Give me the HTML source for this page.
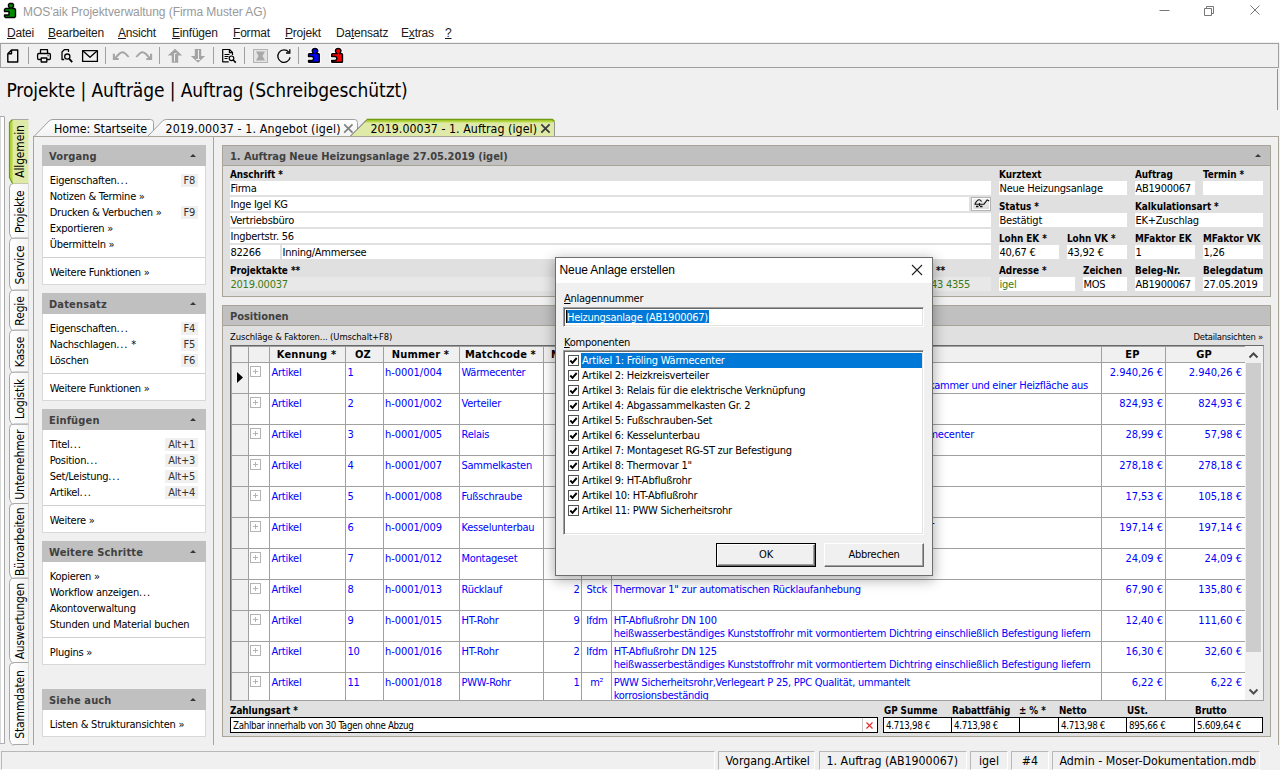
<!DOCTYPE html>
<html lang="de"><head><meta charset="utf-8"><title>MOS'aik Projektverwaltung</title>
<style>
*{box-sizing:border-box;margin:0;padding:0}
html,body{width:1280px;height:770px;overflow:hidden;background:#f0f0f0}
body{font-family:"DejaVu Sans Condensed","Liberation Sans",sans-serif;font-size:11px;color:#000;position:relative;letter-spacing:-0.25px}
.abs{position:absolute}
.t{position:absolute;white-space:nowrap;line-height:14px}
.b{font-weight:bold;letter-spacing:-0.1px}
u{text-decoration:underline}
.menu{position:absolute;top:24px;font-family:"Liberation Sans",sans-serif;font-size:12px;letter-spacing:-0.2px;color:#1a1a1a;white-space:nowrap;line-height:18px}
.gh{position:absolute;background:#c0c0c0;height:21px;font-weight:bold;font-size:11px;color:#404040;line-height:24px;padding-left:7px;letter-spacing:-0.050px}
.gh i{position:absolute;right:10px;top:9px;width:0;height:0;border-left:3px solid transparent;border-right:3px solid transparent;border-bottom:3px solid #383838}
.lb{position:absolute;background:#fff;border:1px solid #d8d8d8;border-top:none}
.li{position:absolute;left:6.700px;white-space:nowrap;line-height:14px}
.k{position:absolute;color:#333;background:#f0f0f0;line-height:14px;height:13px;padding:0 3px;white-space:nowrap}
.d{letter-spacing:0.9px}
.sep{position:absolute;left:0;right:0;height:1px;background:#d0d0d0}
.fld{position:absolute;background:#fff;height:14px;line-height:16px;white-space:nowrap;padding-left:0.5px;overflow:hidden}
.lab{position:absolute;font-weight:bold;font-size:9.900px;white-space:nowrap;line-height:14px;letter-spacing:-0.05px;margin-top:1px}
.grn{color:#3b7c16}
.sb{position:absolute;top:751px;height:19px;border:1px solid #b8b8b8;border-right-color:#fff;border-bottom-color:#fff;background:#f0f0f0;font-size:12.300px;line-height:19px;white-space:nowrap;letter-spacing:0;padding-left:6.500px}

.c{position:absolute;white-space:nowrap;line-height:14px;color:#0000ff}
.n{letter-spacing:-0.030px}
.hc{position:absolute;white-space:nowrap;line-height:14px;font-weight:bold;letter-spacing:0.150px}
.tf{position:absolute;height:16px;background:#fff;border:1px solid #000;font-size:9.700px;line-height:13px;white-space:nowrap;letter-spacing:-0.3px;overflow:hidden}
.tf span{position:absolute;left:2px;top:1px}
.sunk{background:#fff;border:1px solid #a0a0a0;border-right-color:#fff;border-bottom-color:#fff;box-shadow:inset 1px 1px 0 #696969,inset -1px -1px 0 #e3e3e3}
.cb{width:11px;height:11px;background:#fff;border:1px solid #555}
.cb svg{position:absolute;left:0;top:0}
</style></head>
<body>
<div class="abs" style="left:0;top:0;width:1280px;height:42px;background:#fff"></div>
<svg class="abs" style="left:0;top:0" width="20" height="20" viewBox="0 0 20 20"><path d="M9.500 3.500h3l1 1v2l-1 1h-.5v1h2.500l1 1v7l-1 1h-9l-1-1v-1.500h4.500v-3.500h-4.500v-2l1-1h4.500v-1h-.5l-1-1v-2z" fill="#008c00" stroke="#000" stroke-width="1.400" stroke-linejoin="round"/></svg>
<div class="t" style="left:23px;top:4px;font-family:'Liberation Sans',sans-serif;font-size:12px;letter-spacing:-0.05px;color:#999;line-height:16px">MOS'aik Projektverwaltung (Firma Muster AG)</div>
<svg class="abs" style="left:1150px;top:0" width="130" height="22" viewBox="0 0 130 22"><g stroke="#777" stroke-width="1" fill="none"><path d="M9.5 10.5h10"/><path d="M54.5 8.5h7v7h-7z M56.5 8.5v-2h7v7h-2"/><path d="M100.5 5.5l9 9M109.5 5.5l-9 9"/></g></svg>
<div class="menu" style="left:7px"><u>D</u>atei</div>
<div class="menu" style="left:48px"><u>B</u>earbeiten</div>
<div class="menu" style="left:118px"><u>A</u>nsicht</div>
<div class="menu" style="left:172px"><u>E</u>infügen</div>
<div class="menu" style="left:233px"><u>F</u>ormat</div>
<div class="menu" style="left:285px"><u>P</u>rojekt</div>
<div class="menu" style="left:336px">Da<u>t</u>ensatz</div>
<div class="menu" style="left:401px">E<u>x</u>tras</div>
<div class="menu" style="left:445px"><u>?</u></div>
<div class="abs" style="left:0;top:43px;width:1279px;height:25px;border:1px solid #a0a0a0;background:#f0f0f0"></div>
<svg class="abs" style="left:0;top:43px" width="360" height="25" viewBox="0 43 360 25">
<g stroke="#a0a0a0" stroke-width="1"><path d="M28.5 47v17M105.5 47v17M159.5 47v17M213.5 47v17M244.5 47v17M298.5 47v17"/></g>
<!-- new document -->
<path d="M11.5 50h6.2v12h-9.9v-8.3z M11.5 50v3.7h-3.7" fill="none" stroke="#000" stroke-width="1.4" stroke-linejoin="round"/>
<!-- printer -->
<g fill="none" stroke="#000" stroke-width="1.3" stroke-linejoin="round"><path d="M40.5 53.5v-3.8h7v3.8"/><rect x="37.6" y="53.5" width="12.8" height="6" rx="1.2"/><rect x="41.2" y="58" width="5.6" height="4" fill="#f0f0f0"/><path d="M47.6 55.6h.9"/></g>
<!-- preview (doc with magnifier) -->
<g fill="none" stroke="#000" stroke-width="1.3"><path d="M68.5 52v-2.3h-4.2l-2.3 2.3v7.5h2.2" stroke-linejoin="round"/><circle cx="67.3" cy="56.6" r="2.6"/><path d="M69.3 58.8l2.9 3.4" stroke-width="1.8"/></g>
<!-- mail -->
<g fill="none" stroke="#000" stroke-width="1.3" stroke-linejoin="round"><rect x="82.6" y="50.6" width="14.8" height="10.8"/><path d="M82.8 50.8l7.2 6.4 7.2-6.4"/></g>
<!-- undo / redo (disabled) -->
<g fill="none" stroke="#a4a4a4" stroke-width="1.9"><path d="M115.300 58.200c2.500-3.200 5-6 7-6s4.500 2.500 6.400 4.800"/><path d="M113.900 53.700v5.300h4.800" stroke-width="2.100"/><path d="M149.700 58.200c-2.500-3.200-5-6-7-6s-4.500 2.500-6.400 4.800"/><path d="M151.100 53.700v5.300h-4.800" stroke-width="2.100"/></g>
<!-- up / down arrows (disabled) -->
<g fill="#a4a4a4" stroke="none"><path d="M175 48.800l7.200 6.700h-4v7.200h-6.400v-7.200h-4z"/><path d="M198 62.800l7.200-6.700h-4v-7.200h-6.400v7.200h-4z"/></g>
<g fill="none" stroke="#f0f0f0" stroke-width="1"><path d="M174.500 61.500v-8h2"/><path d="M198.500 50v9.500M196 59.500h4"/></g>
<!-- document search -->
<g fill="none" stroke="#000" stroke-width="1.2"><path d="M232.500 55v-2.500l-3-3h-6.800v12.300h6" stroke-linejoin="round"/><path d="M229.400 49.700v3h3"/><path d="M224.500 54.500h5M224.500 56.500h4M224.500 58.500h3" stroke-width="1"/><circle cx="231.500" cy="58.300" r="2.300"/><path d="M233.200 60l2.600 2.600" stroke-width="1.500"/></g>
<!-- disabled X box -->
<g><rect x="253.500" y="49.500" width="14" height="13" fill="#e4e4e4" stroke="#b4b4b4" stroke-width="1"/><path d="M256 51.500h9l-2.500 4.500 2.500 4.500h-9l2.500-4.500z" fill="#a8a8a8"/></g>
<!-- refresh -->
<g fill="none" stroke="#000" stroke-width="1.300"><path d="M288.800 52.200a6.200 6.200 0 1 0 1.300 5.200"/><path d="M289.800 49.200v3.800h-3.800" stroke-linejoin="miter"/></g>
<!-- blue puzzle -->
<path d="M313.8 53.600C311.3 52 311.8 48.400 315.0 48.400S318.7 52 316.2 53.600H318.5Q319.3 53.600 319.3 54.400V61.500Q319.3 62.300 318.5 62.300H309.3Q308.5 62.300 308.5 61.500V60.400H311.6A2 2 0 0 0 311.6 56.400H308.5V54.400Q308.5 53.600 309.3 53.600Z" fill="none" stroke="#fff" stroke-width="3.200" stroke-linejoin="round"/><path d="M313.8 53.600C311.3 52 311.8 48.400 315.0 48.400S318.7 52 316.2 53.600H318.5Q319.3 53.600 319.3 54.400V61.500Q319.3 62.300 318.5 62.300H309.3Q308.5 62.300 308.5 61.500V60.400H311.6A2 2 0 0 0 311.6 56.400H308.5V54.400Q308.5 53.600 309.3 53.600Z" fill="#0000f8" stroke="#000" stroke-width="1.450" stroke-linejoin="round"/>
<!-- red puzzle -->
<path d="M337.0 53.600C334.5 52 335.0 48.400 338.2 48.400S341.9 52 339.4 53.600H341.7Q342.5 53.600 342.5 54.400V61.500Q342.5 62.300 341.7 62.300H332.5Q331.7 62.300 331.7 61.500V60.400H334.8A2 2 0 0 0 334.8 56.400H331.7V54.400Q331.7 53.600 332.5 53.600Z" fill="none" stroke="#fff" stroke-width="3.200" stroke-linejoin="round"/><path d="M337.0 53.600C334.5 52 335.0 48.400 338.2 48.400S341.9 52 339.4 53.600H341.7Q342.5 53.600 342.5 54.400V61.500Q342.5 62.300 341.7 62.300H332.5Q331.7 62.300 331.7 61.500V60.400H334.8A2 2 0 0 0 334.8 56.400H331.7V54.400Q331.7 53.600 332.5 53.600Z" fill="#f80000" stroke="#000" stroke-width="1.450" stroke-linejoin="round"/>
</svg>

<div class="t" style="left:6.500px;top:78px;font-size:19px;line-height:24px;letter-spacing:-0.1px">Projekte | Aufträge | Auftrag (Schreibgeschützt)</div>
<div class="abs" style="left:1277px;top:69px;width:1px;height:41px;background:#909090"></div>
<svg class="abs" style="left:0;top:110px" width="34" height="640" viewBox="0 110 34 640" font-family="DejaVu Sans Condensed,Liberation Sans,sans-serif" font-size="12">
<defs><linearGradient id="vg" x1="0" y1="0" x2="1" y2="0"><stop offset="0" stop-color="#fff"/><stop offset="1" stop-color="#f4f4f4"/></linearGradient><linearGradient id="va" x1="0" y1="0" x2="1" y2="0"><stop offset="0" stop-color="#b3d535"/><stop offset=".13" stop-color="#b8d844"/><stop offset=".2" stop-color="#dfeaa9"/><stop offset="1" stop-color="#dfeaa9"/></linearGradient></defs>
<path d="M0 116h5v628h-5z" fill="#fff"/><path d="M0 116.500h4.500v627" stroke="#a8a8a8" stroke-width="1" fill="none"/><path d="M0.500 117v626" stroke="#d8d8d8" fill="none"/><path d="M0 743.500h5" stroke="#b0b0b0" fill="none"/>
<path d="M28.500 662.5H13Q9.500 663.0 9.500 667.0V739.5Q10 743.0 13 745.5L13.500 744.5H28.500" fill="url(#vg)" stroke="#a8a8a8" stroke-width="1"/>
<path d="M28.500 662.5V744.5" stroke="#d8d8d8" stroke-width="1"/>
<path d="M28.500 578H13Q9.500 578.5 9.500 582.5V657.5Q10 661.0 13 663.5L13.500 662.5H28.500" fill="url(#vg)" stroke="#a8a8a8" stroke-width="1"/>
<path d="M28.500 578V662.5" stroke="#d8d8d8" stroke-width="1"/>
<path d="M28.500 503.5H13Q9.500 504.0 9.500 508.0V573Q10 576.5 13 579L13.500 578H28.500" fill="url(#vg)" stroke="#a8a8a8" stroke-width="1"/>
<path d="M28.500 503.5V578" stroke="#d8d8d8" stroke-width="1"/>
<path d="M28.500 424H13Q9.500 424.5 9.500 428.5V498.5Q10 502.0 13 504.5L13.500 503.5H28.500" fill="url(#vg)" stroke="#a8a8a8" stroke-width="1"/>
<path d="M28.500 424V503.5" stroke="#d8d8d8" stroke-width="1"/>
<path d="M28.500 372H13Q9.500 372.5 9.500 376.5V419Q10 422.5 13 425L13.500 424H28.500" fill="url(#vg)" stroke="#a8a8a8" stroke-width="1"/>
<path d="M28.500 372V424" stroke="#d8d8d8" stroke-width="1"/>
<path d="M28.500 330H13Q9.500 330.5 9.500 334.5V367Q10 370.5 13 373L13.500 372H28.500" fill="url(#vg)" stroke="#a8a8a8" stroke-width="1"/>
<path d="M28.500 330V372" stroke="#d8d8d8" stroke-width="1"/>
<path d="M28.500 290H13Q9.500 290.5 9.500 294.5V325Q10 328.5 13 331L13.500 330H28.500" fill="url(#vg)" stroke="#a8a8a8" stroke-width="1"/>
<path d="M28.500 290V330" stroke="#d8d8d8" stroke-width="1"/>
<path d="M28.500 238H13Q9.500 238.5 9.500 242.5V285Q10 288.5 13 291L13.500 290H28.500" fill="url(#vg)" stroke="#a8a8a8" stroke-width="1"/>
<path d="M28.500 238V290" stroke="#d8d8d8" stroke-width="1"/>
<path d="M28.500 183.5H13Q9.500 184.0 9.500 188.0V233Q10 236.5 13 239L13.500 238H28.500" fill="url(#vg)" stroke="#a8a8a8" stroke-width="1"/>
<path d="M28.500 183.5V238" stroke="#d8d8d8" stroke-width="1"/>
<path d="M28.500 119.5H12.500L9.500 122.5V177.5L12.500 183.5H28.500Z" fill="url(#va)"/><path d="M12.500 119.5L9.500 122.5V177.5L12.500 183.5" fill="none" stroke="#6c9c0c" stroke-width="1.200"/><path d="M12.500 119.5H28.500" fill="none" stroke="#a8a8a8" stroke-width="1"/>
<text transform="translate(23.500 151.5) rotate(-90)" text-anchor="middle" letter-spacing="-0.150">Allgemein</text>
<text transform="translate(23.500 211.75) rotate(-90)" text-anchor="middle" letter-spacing="-0.150">Projekte</text>
<text transform="translate(23.500 265.0) rotate(-90)" text-anchor="middle" letter-spacing="-0.150">Service</text>
<text transform="translate(23.500 311.0) rotate(-90)" text-anchor="middle" letter-spacing="-0.150">Regie</text>
<text transform="translate(23.500 352.0) rotate(-90)" text-anchor="middle" letter-spacing="-0.150">Kasse</text>
<text transform="translate(23.500 399.0) rotate(-90)" text-anchor="middle" letter-spacing="-0.150">Logistik</text>
<text transform="translate(23.500 464.75) rotate(-90)" text-anchor="middle" letter-spacing="-0.150">Unternehmer</text>
<text transform="translate(23.500 541.75) rotate(-90)" text-anchor="middle" letter-spacing="-0.150">Büroarbeiten</text>
<text transform="translate(23.500 621.25) rotate(-90)" text-anchor="middle" letter-spacing="-0.150">Auswertungen</text>
<text transform="translate(23.500 704.5) rotate(-90)" text-anchor="middle" letter-spacing="-0.150">Stammdaten</text>
</svg>
<svg class="abs" style="left:30px;top:115px" width="540" height="23" viewBox="30 115 540 23" font-family="DejaVu Sans Condensed,Liberation Sans,sans-serif" font-size="12.300">
<defs><linearGradient id="hg" x1="0" y1="0" x2="0" y2="1"><stop offset="0" stop-color="#fff"/><stop offset="1" stop-color="#f2f2f2"/></linearGradient><linearGradient id="ha" x1="0" y1="0" x2="0" y2="1"><stop offset="0" stop-color="#b3d535"/><stop offset=".14" stop-color="#b8d844"/><stop offset=".2" stop-color="#dfeaa9"/><stop offset="1" stop-color="#dfeaa9"/></linearGradient></defs>
<path d="M34 136.500L49 121Q50.5 119.500 53 119.500H150.5Q153.5 119.500 153.5 122.500V136.500" fill="url(#hg)" stroke="#a0a0a0" stroke-width="1"/>
<path d="M147.5 136.500L162.5 121Q164.0 119.500 166.5 119.500H354.5Q357.5 119.500 357.5 122.500V136.500" fill="url(#hg)" stroke="#a0a0a0" stroke-width="1"/>
<path d="M350 136.500L367 119.500H552.5L554.5 121.500V136.500Z" fill="url(#ha)"/>
<path d="M350 136.500L366.5 120" stroke="#606060" stroke-width="1" fill="none"/>
<path d="M366.5 119.500H552.5L554.5 121.500" stroke="#6c9c0c" stroke-width="1.300" fill="none"/>
<path d="M554.5 122V136.500" stroke="#949494" stroke-width="1" fill="none"/>
<text x="54" y="132.500" letter-spacing="-0.050">Home: Startseite</text>
<text x="165.500" y="132.500" letter-spacing="0.150">2019.00037 - 1. Angebot (igel)</text>
<text x="370.500" y="132.500" letter-spacing="0.050">2019.00037 - 1. Auftrag (igel)</text>
<path d="M344.200 124.300l8.300 8.400M352.500 124.300l-8.300 8.400" stroke="#808080" stroke-width="1.700" fill="none"/>
<path d="M541.300 124.300l8.300 8.400M549.600 124.300l-8.300 8.400" stroke="#3c3c3c" stroke-width="1.800" fill="none"/>
</svg>
<div class="abs" style="left:33px;top:136px;width:181px;height:609px;border:1px solid #a8a498;border-right:none;border-bottom:none;"></div>
<div class="abs" style="left:213px;top:136px;width:1px;height:609px;background:#a8a498"></div>
<div class="abs" style="left:214px;top:136px;width:1065px;height:609px;border-top:1px solid #a8a498;border-right:1px solid #a8a498"></div>
<div class="gh" style="left:42px;top:145px;width:164px;letter-spacing:0.150px">Vorgang<i></i></div>
<div class="lb" style="left:42px;top:166px;width:164px;height:119px"><div class="li" style="top:8px">Eigenschaften<span class=d>...</span></div><div class="k" style="right:7px;top:7.5px">F8</div><div class="li" style="top:24px">Notizen &amp; Termine »</div><div class="li" style="top:40px">Drucken &amp; Verbuchen »</div><div class="k" style="right:7px;top:39.5px">F9</div><div class="li" style="top:56px">Exportieren »</div><div class="li" style="top:72px">Übermitteln »</div><div class="sep" style="top:91px"></div><div class="li" style="top:100px">Weitere Funktionen »</div></div>
<div class="gh" style="left:42px;top:293px;width:164px;letter-spacing:0.150px">Datensatz<i></i></div>
<div class="lb" style="left:42px;top:314px;width:164px;height:87px"><div class="li" style="top:8px">Eigenschaften<span class=d>...</span></div><div class="k" style="right:7px;top:7.5px">F4</div><div class="li" style="top:24px">Nachschlagen<span class=d>...</span> *</div><div class="k" style="right:7px;top:23.5px">F5</div><div class="li" style="top:40px">Löschen</div><div class="k" style="right:7px;top:39.5px">F6</div><div class="sep" style="top:59px"></div><div class="li" style="top:68px">Weitere Funktionen »</div></div>
<div class="gh" style="left:42px;top:409px;width:164px;letter-spacing:0.150px">Einfügen<i></i></div>
<div class="lb" style="left:42px;top:430px;width:164px;height:103px"><div class="li" style="top:8px">Titel<span class=d>...</span></div><div class="k" style="right:7px;top:7.5px">Alt+1</div><div class="li" style="top:24px">Position<span class=d>...</span></div><div class="k" style="right:7px;top:23.5px">Alt+3</div><div class="li" style="top:40px">Set/Leistung<span class=d>...</span></div><div class="k" style="right:7px;top:39.5px">Alt+5</div><div class="li" style="top:56px">Artikel<span class=d>...</span></div><div class="k" style="right:7px;top:55.5px">Alt+4</div><div class="sep" style="top:75px"></div><div class="li" style="top:84px">Weitere »</div></div>
<div class="gh" style="left:42px;top:541px;width:164px;letter-spacing:0.150px">Weitere Schritte<i></i></div>
<div class="lb" style="left:42px;top:562px;width:164px;height:103px"><div class="li" style="top:8px">Kopieren »</div><div class="li" style="top:24px">Workflow anzeigen<span class=d>...</span></div><div class="li" style="top:40px">Akontoverwaltung</div><div class="li" style="top:56px">Stunden und Material buchen</div><div class="sep" style="top:75px"></div><div class="li" style="top:84px">Plugins »</div></div>
<div class="gh" style="left:42px;top:689px;width:164px;letter-spacing:0.150px">Siehe auch<i></i></div>
<div class="lb" style="left:42px;top:710px;width:164px;height:27px"><div class="li" style="top:8px">Listen &amp; Strukturansichten »</div></div>
<div class="abs" style="left:222px;top:145px;width:1049px;height:152px;border:1px solid #a8a498;background:#e0e0e0"></div>
<div class="gh" style="left:223px;top:146px;width:1047px;height:20px;line-height:21px;border-bottom:1px solid #a8a498">1. Auftrag Neue Heizungsanlage 27.05.2019 (igel)<i style="right:9.500px;top:8px"></i></div>
<div class="lab" style="left:230px;top:167px">Anschrift *</div>
<div class="fld " style="left:230px;top:181px;width:761px">Firma</div>
<div class="fld " style="left:230px;top:197px;width:739px">Inge Igel KG</div>
<div class="fld " style="left:230px;top:213px;width:761px">Vertriebsbüro</div>
<div class="fld " style="left:230px;top:229px;width:761px">Ingbertstr. 56</div>
<div class="fld " style="left:230px;top:245px;width:50px">82266</div>
<div class="fld " style="left:282px;top:245px;width:709px">Inning/Ammersee</div>
<div class="abs" style="left:971px;top:197px;width:20px;height:14px;border:1px solid #b4b4b4;background:linear-gradient(#f0f0f0,#dcdcdc);box-shadow:inset 0 0 0 1px #fff"></div>
<svg class="abs" style="left:971px;top:197px" width="20" height="14" viewBox="971 197 20 14"><g fill="none" stroke="#111" stroke-width="1.100"><path d="M975 204c1.200-2.500 2.800-4.200 4.200-4.200s1.800 1 2.300 1.800"/><path d="M974.500 204.200h9.500l3.200-4.200 2 1"/><path d="M976 206.500h2.500M980 206.500h2.500" stroke-width="1.300"/><path d="M979.500 203v3"/></g></svg>
<div class="lab" style="left:230px;top:263px">Projektakte **</div>
<div class="fld grn" style="left:230px;top:277px;width:761px;background:#e8e8e8">2019.00037</div>
<div class="lab" style="left:936px;top:263px">**</div>
<div class="t grn" style="left:931px;top:278px">43 4355</div>
<div class="lab" style="left:999px;top:167px">Kurztext</div>
<div class="fld " style="left:999px;top:181px;width:128px">Neue Heizungsanlage</div>
<div class="lab" style="left:1135px;top:167px">Auftrag</div>
<div class="fld " style="left:1135px;top:181px;width:60px">AB1900067</div>
<div class="lab" style="left:1203px;top:167px">Termin *</div>
<div class="fld " style="left:1203px;top:181px;width:60px"></div>
<div class="lab" style="left:999px;top:199px">Status *</div>
<div class="fld " style="left:999px;top:213px;width:128px">Bestätigt</div>
<div class="lab" style="left:1135px;top:199px">Kalkulationsart *</div>
<div class="fld " style="left:1135px;top:213px;width:128px">EK+Zuschlag</div>
<div class="lab" style="left:999px;top:231px">Lohn EK *</div>
<div class="fld " style="left:999px;top:245px;width:60px">40,67 €</div>
<div class="lab" style="left:1067px;top:231px">Lohn VK *</div>
<div class="fld " style="left:1067px;top:245px;width:60px">43,92 €</div>
<div class="lab" style="left:1135px;top:231px">MFaktor EK</div>
<div class="fld " style="left:1135px;top:245px;width:60px">1</div>
<div class="lab" style="left:1203px;top:231px">MFaktor VK</div>
<div class="fld " style="left:1203px;top:245px;width:60px">1,26</div>
<div class="lab" style="left:999px;top:263px">Adresse *</div>
<div class="fld grn" style="left:999px;top:277px;width:76px">igel</div>
<div class="lab" style="left:1083px;top:263px">Zeichen</div>
<div class="fld " style="left:1083px;top:277px;width:44px">MOS</div>
<div class="lab" style="left:1135px;top:263px">Beleg-Nr.</div>
<div class="fld " style="left:1135px;top:277px;width:60px">AB1900067</div>
<div class="lab" style="left:1203px;top:263px">Belegdatum</div>
<div class="fld " style="left:1203px;top:277px;width:60px">27.05.2019</div>
<div class="abs" style="left:222px;top:305px;width:1049px;height:432px;border:1px solid #a8a498;background:#e0e0e0"></div>
<div class="gh" style="left:223px;top:306px;width:1047px;height:20px;line-height:21px;border-bottom:1px solid #a8a498">Positionen</div>
<div class="t" style="left:230px;top:330px;font-size:9.400px;letter-spacing:-0.100px">Zuschläge &amp; Faktoren... (Umschalt+F8)</div>
<div class="t" style="right:17px;top:330px;font-size:9.400px;letter-spacing:-0.250px">Detailansichten »</div>
<div class="abs" id="grid" style="left:230px;top:345px;width:1034px;height:356px;background:#fff;border:1px solid #696969;border-right-color:#a0a0a0;border-bottom-color:#a0a0a0;overflow:hidden">
<div class="abs" style="left:0;top:0;width:1014px;height:16px;background:#f0f0f0"></div>
<div class="abs" style="left:0;top:0;width:17px;height:356px;background:#f0f0f0"></div>
<div class="abs" style="left:0;top:0;width:1px;height:356px;background:#a0a0a0"></div>
<div class="abs" style="left:0;top:0;width:1014px;height:1px;background:#a0a0a0"></div>
<svg class="abs" style="left:0;top:0" width="1014" height="356" viewBox="231 346 1014 356"><g stroke="#a0a0a0" stroke-width="1" fill="none"><path d="M231 362.5H1245M231 393.5H1245M231 424.5H1245M231 455.5H1245M231 486.5H1245M231 517.5H1245M231 548.5H1245M231 579.5H1245M231 610.5H1245M231 641.5H1245M231 672.5H1245M248.5 346V702M269.5 346V702M345.5 346V702M383.5 346V702M459.5 346V702M543.5 346V702M581.5 346V702M611.5 346V702M1101.5 346V702M1165.5 346V702"/></g><rect x="250.500" y="366.5" width="10" height="10" fill="#fff" stroke="#b4b4b4"/><path d="M253 371.5h5M255.500 369v5" stroke="#b4b4b4" fill="none"/><rect x="250.500" y="397.5" width="10" height="10" fill="#fff" stroke="#b4b4b4"/><path d="M253 402.5h5M255.500 400v5" stroke="#b4b4b4" fill="none"/><rect x="250.500" y="428.5" width="10" height="10" fill="#fff" stroke="#b4b4b4"/><path d="M253 433.5h5M255.500 431v5" stroke="#b4b4b4" fill="none"/><rect x="250.500" y="459.5" width="10" height="10" fill="#fff" stroke="#b4b4b4"/><path d="M253 464.5h5M255.500 462v5" stroke="#b4b4b4" fill="none"/><rect x="250.500" y="490.5" width="10" height="10" fill="#fff" stroke="#b4b4b4"/><path d="M253 495.5h5M255.500 493v5" stroke="#b4b4b4" fill="none"/><rect x="250.500" y="521.5" width="10" height="10" fill="#fff" stroke="#b4b4b4"/><path d="M253 526.5h5M255.500 524v5" stroke="#b4b4b4" fill="none"/><rect x="250.500" y="552.5" width="10" height="10" fill="#fff" stroke="#b4b4b4"/><path d="M253 557.5h5M255.500 555v5" stroke="#b4b4b4" fill="none"/><rect x="250.500" y="583.5" width="10" height="10" fill="#fff" stroke="#b4b4b4"/><path d="M253 588.5h5M255.500 586v5" stroke="#b4b4b4" fill="none"/><rect x="250.500" y="614.5" width="10" height="10" fill="#fff" stroke="#b4b4b4"/><path d="M253 619.5h5M255.500 617v5" stroke="#b4b4b4" fill="none"/><rect x="250.500" y="645.5" width="10" height="10" fill="#fff" stroke="#b4b4b4"/><path d="M253 650.5h5M255.500 648v5" stroke="#b4b4b4" fill="none"/><rect x="250.500" y="676.5" width="10" height="10" fill="#fff" stroke="#b4b4b4"/><path d="M253 681.5h5M255.500 679v5" stroke="#b4b4b4" fill="none"/><path d="M237 372v11l6-5.500z" fill="#000"/></svg>
<div class="hc" style="left:39px;top:2px;width:73px;text-align:center">Kennung *</div>
<div class="hc" style="left:115px;top:2px;width:34px;text-align:center">OZ</div>
<div class="hc" style="left:153px;top:2px;width:73px;text-align:center">Nummer *</div>
<div class="hc" style="left:229px;top:2px;width:81px;text-align:center">Matchcode *</div>
<div class="hc" style="left:320px;top:2px">Menge *</div>
<div class="hc" style="left:871px;top:2px;width:61px;text-align:center">EP</div>
<div class="hc" style="left:935px;top:2px;width:76px;text-align:center">GP</div>
<div class="c" style="left:40.5px;top:20px">Artikel</div>
<div class="c" style="left:116.5px;top:20px">1</div>
<div class="c n" style="left:154px;top:20px">h-0001/004</div>
<div class="c" style="left:230.5px;top:20px">Wärmecenter</div>
<div class="c n" style="left:871px;top:20px;width:61px;text-align:right">2.940,26 €</div>
<div class="c n" style="left:935px;top:20px;width:76px;text-align:right">2.940,26 €</div>
<div class="c" style="left:40.5px;top:51px">Artikel</div>
<div class="c" style="left:116.5px;top:51px">2</div>
<div class="c n" style="left:154px;top:51px">h-0001/002</div>
<div class="c" style="left:230.5px;top:51px">Verteiler</div>
<div class="c n" style="left:871px;top:51px;width:61px;text-align:right">824,93 €</div>
<div class="c n" style="left:935px;top:51px;width:76px;text-align:right">824,93 €</div>
<div class="c" style="left:40.5px;top:82px">Artikel</div>
<div class="c" style="left:116.5px;top:82px">3</div>
<div class="c n" style="left:154px;top:82px">h-0001/005</div>
<div class="c" style="left:230.5px;top:82px">Relais</div>
<div class="c n" style="left:871px;top:82px;width:61px;text-align:right">28,99 €</div>
<div class="c n" style="left:935px;top:82px;width:76px;text-align:right">57,98 €</div>
<div class="c" style="left:40.5px;top:113px">Artikel</div>
<div class="c" style="left:116.5px;top:113px">4</div>
<div class="c n" style="left:154px;top:113px">h-0001/007</div>
<div class="c" style="left:230.5px;top:113px">Sammelkasten</div>
<div class="c n" style="left:871px;top:113px;width:61px;text-align:right">278,18 €</div>
<div class="c n" style="left:935px;top:113px;width:76px;text-align:right">278,18 €</div>
<div class="c" style="left:40.5px;top:144px">Artikel</div>
<div class="c" style="left:116.5px;top:144px">5</div>
<div class="c n" style="left:154px;top:144px">h-0001/008</div>
<div class="c" style="left:230.5px;top:144px">Fußschraube</div>
<div class="c n" style="left:871px;top:144px;width:61px;text-align:right">17,53 €</div>
<div class="c n" style="left:935px;top:144px;width:76px;text-align:right">105,18 €</div>
<div class="c" style="left:40.5px;top:175px">Artikel</div>
<div class="c" style="left:116.5px;top:175px">6</div>
<div class="c n" style="left:154px;top:175px">h-0001/009</div>
<div class="c" style="left:230.5px;top:175px">Kesselunterbau</div>
<div class="c n" style="left:871px;top:175px;width:61px;text-align:right">197,14 €</div>
<div class="c n" style="left:935px;top:175px;width:76px;text-align:right">197,14 €</div>
<div class="c" style="left:40.5px;top:206px">Artikel</div>
<div class="c" style="left:116.5px;top:206px">7</div>
<div class="c n" style="left:154px;top:206px">h-0001/012</div>
<div class="c" style="left:230.5px;top:206px">Montageset</div>
<div class="c n" style="left:871px;top:206px;width:61px;text-align:right">24,09 €</div>
<div class="c n" style="left:935px;top:206px;width:76px;text-align:right">24,09 €</div>
<div class="c" style="left:40.5px;top:237px">Artikel</div>
<div class="c" style="left:116.5px;top:237px">8</div>
<div class="c n" style="left:154px;top:237px">h-0001/013</div>
<div class="c" style="left:230.5px;top:237px">Rücklauf</div>
<div class="c" style="left:313px;top:237px;width:35.5px;text-align:right">2</div>
<div class="c" style="left:351px;top:237px;width:29.5px;text-align:center">Stck</div>
<div class="c" style="left:382.70000000000005px;top:237px">Thermovar 1" zur automatischen Rücklaufanhebung</div>
<div class="c n" style="left:871px;top:237px;width:61px;text-align:right">67,90 €</div>
<div class="c n" style="left:935px;top:237px;width:76px;text-align:right">135,80 €</div>
<div class="c" style="left:40.5px;top:268px">Artikel</div>
<div class="c" style="left:116.5px;top:268px">9</div>
<div class="c n" style="left:154px;top:268px">h-0001/015</div>
<div class="c" style="left:230.5px;top:268px">HT-Rohr</div>
<div class="c" style="left:313px;top:268px;width:35.5px;text-align:right">9</div>
<div class="c" style="left:351px;top:268px;width:29.5px;text-align:center">lfdm</div>
<div class="c" style="left:382.70000000000005px;top:268px">HT-Abflußrohr DN 100</div>
<div class="c" style="left:382.70000000000005px;top:281px">heißwasserbeständiges Kunststoffrohr mit vormontiertem Dichtring einschließlich Befestigung liefern</div>
<div class="c n" style="left:871px;top:268px;width:61px;text-align:right">12,40 €</div>
<div class="c n" style="left:935px;top:268px;width:76px;text-align:right">111,60 €</div>
<div class="c" style="left:40.5px;top:299px">Artikel</div>
<div class="c" style="left:116.5px;top:299px">10</div>
<div class="c n" style="left:154px;top:299px">h-0001/016</div>
<div class="c" style="left:230.5px;top:299px">HT-Rohr</div>
<div class="c" style="left:313px;top:299px;width:35.5px;text-align:right">2</div>
<div class="c" style="left:351px;top:299px;width:29.5px;text-align:center">lfdm</div>
<div class="c" style="left:382.70000000000005px;top:299px">HT-Abflußrohr DN 125</div>
<div class="c" style="left:382.70000000000005px;top:312px">heißwasserbeständiges Kunststoffrohr mit vormontiertem Dichtring einschließlich Befestigung liefern</div>
<div class="c n" style="left:871px;top:299px;width:61px;text-align:right">16,30 €</div>
<div class="c n" style="left:935px;top:299px;width:76px;text-align:right">32,60 €</div>
<div class="c" style="left:40.5px;top:330px">Artikel</div>
<div class="c" style="left:116.5px;top:330px">11</div>
<div class="c n" style="left:154px;top:330px">h-0001/018</div>
<div class="c" style="left:230.5px;top:330px">PWW-Rohr</div>
<div class="c" style="left:313px;top:330px;width:35.5px;text-align:right">1</div>
<div class="c" style="left:351px;top:330px;width:29.5px;text-align:center">m²</div>
<div class="c" style="left:382.70000000000005px;top:330px">PWW Sicherheitsrohr,Verlegeart P 25, PPC Qualität, ummantelt</div>
<div class="c" style="left:382.70000000000005px;top:343px">korrosionsbeständig</div>
<div class="c n" style="left:871px;top:330px;width:61px;text-align:right">6,22 €</div>
<div class="c n" style="left:935px;top:330px;width:76px;text-align:right">6,22 €</div>
<div class="c" style="right:175px;top:33px">kammer und einer Heizfläche aus</div>
<div class="c" style="right:289px;top:82px">Wärmecenter</div>
<div class="c" style="right:329px;top:175px">T</div>
</div>
<div class="abs" style="left:1245px;top:346px;width:18px;height:354px;background:#f0f0f0"></div>
<div class="abs" style="left:1246px;top:363px;width:15px;height:289px;background:#cdcdcd"></div>
<svg class="abs" style="left:1245px;top:346px" width="17" height="354" viewBox="0 0 17 354"><path d="M4.500 11.500l4-4 4 4" fill="none" stroke="#484848" stroke-width="2"/><path d="M4.500 343.500l4 4 4-4" fill="none" stroke="#505050" stroke-width="2"/></svg>
<div class="lab" style="left:230px;top:703px">Zahlungsart *</div>
<div class="tf" style="left:230px;top:717px;width:648px"><span>Zahlbar innerhalb von 30 Tagen ohne Abzug</span></div>
<div class="abs" style="left:862px;top:718px;width:1px;height:14px;background:#c8c8c8"></div>
<svg class="abs" style="left:865px;top:721px" width="9" height="9" viewBox="0 0 9 9"><path d="M1.500 1.500l6 6M7.500 1.500l-6 6" stroke="#e03030" stroke-width="1.200" fill="none"/></svg>
<div class="lab" style="left:884px;top:703px;font-size:9.800px">GP Summe</div>
<div class="tf" style="left:883px;top:717px;width:69px"><span>4.713,98 €</span></div>
<div class="lab" style="left:952px;top:703px;font-size:9.800px">Rabattfähig</div>
<div class="tf" style="left:951px;top:717px;width:69px"><span>4.713,98 €</span></div>
<div class="lab" style="left:1019px;top:703px;font-size:9.800px">± % *</div>
<div class="tf" style="left:1019px;top:717px;width:40px"><span></span></div>
<div class="lab" style="left:1059px;top:703px;font-size:9.800px">Netto</div>
<div class="tf" style="left:1058px;top:717px;width:69px"><span>4.713,98 €</span></div>
<div class="lab" style="left:1127px;top:703px;font-size:9.800px">USt.</div>
<div class="tf" style="left:1126px;top:717px;width:69px"><span>895,66 €</span></div>
<div class="lab" style="left:1195px;top:703px;font-size:9.800px">Brutto</div>
<div class="tf" style="left:1194px;top:717px;width:69px"><span>5.609,64 €</span></div>
<div class="abs" id="dlg" style="left:555px;top:257px;width:378px;height:319px;background:#f0f0f0;border:1px solid #6e6e6e;box-shadow:0 3px 12px 1px rgba(0,0,0,.32)">
<div class="abs" style="left:0;top:0;width:376px;height:25px;background:#fff"></div>
<div class="t" style="left:3.5px;top:4.399999999999977px;font-family:'Liberation Sans',sans-serif;font-size:12px;letter-spacing:-0.1px;line-height:16px">Neue Anlage erstellen</div>
<svg class="abs" style="left:355px;top:6px" width="13" height="13" viewBox="0 0 13 13"><path d="M1 1l10 10M11 1l-10 10" stroke="#222" stroke-width="1.100" fill="none"/></svg>
<div class="t" style="left:8px;top:34px"><u>A</u>nlagennummer</div>
<div class="abs sunk" style="left:7px;top:49px;width:361px;height:20px"></div>
<div class="t" style="left:11px;top:52px;height:13px;line-height:15px;background:#0078d7;color:#fff;padding:0 1px 0 0">Heizungsanlage (AB1900067)</div>
<div class="abs" style="left:10px;top:52px;width:1px;height:13px;background:#000"></div>
<div class="t" style="left:8px;top:78px"><u>K</u>omponenten</div>
<div class="abs sunk" style="left:7px;top:92px;width:361px;height:185px"></div>
<div class="abs" style="left:25px;top:95px;width:341px;height:15px;background:#0078d7"></div>
<div class="abs cb" style="left:12px;top:97px"><svg width="9" height="9" viewBox="0 0 9 9"><path d="M1.300 4.500l2.200 2.300 4.200-4.800" fill="none" stroke="#000" stroke-width="1.900"/></svg></div>
<div class="t" style="left:26px;top:95px;line-height:15px;color:#fff">Artikel 1: Fröling Wärmecenter</div>
<div class="abs cb" style="left:12px;top:112px"><svg width="9" height="9" viewBox="0 0 9 9"><path d="M1.300 4.500l2.200 2.300 4.200-4.800" fill="none" stroke="#000" stroke-width="1.900"/></svg></div>
<div class="t" style="left:26px;top:110px;line-height:15px">Artikel 2: Heizkreisverteiler</div>
<div class="abs cb" style="left:12px;top:127px"><svg width="9" height="9" viewBox="0 0 9 9"><path d="M1.300 4.500l2.200 2.300 4.200-4.800" fill="none" stroke="#000" stroke-width="1.900"/></svg></div>
<div class="t" style="left:26px;top:125px;line-height:15px">Artikel 3: Relais für die elektrische Verknüpfung</div>
<div class="abs cb" style="left:12px;top:142px"><svg width="9" height="9" viewBox="0 0 9 9"><path d="M1.300 4.500l2.200 2.300 4.200-4.800" fill="none" stroke="#000" stroke-width="1.900"/></svg></div>
<div class="t" style="left:26px;top:140px;line-height:15px">Artikel 4: Abgassammelkasten Gr. 2</div>
<div class="abs cb" style="left:12px;top:157px"><svg width="9" height="9" viewBox="0 0 9 9"><path d="M1.300 4.500l2.200 2.300 4.200-4.800" fill="none" stroke="#000" stroke-width="1.900"/></svg></div>
<div class="t" style="left:26px;top:155px;line-height:15px">Artikel 5: Fußschrauben-Set</div>
<div class="abs cb" style="left:12px;top:172px"><svg width="9" height="9" viewBox="0 0 9 9"><path d="M1.300 4.500l2.200 2.300 4.200-4.800" fill="none" stroke="#000" stroke-width="1.900"/></svg></div>
<div class="t" style="left:26px;top:170px;line-height:15px">Artikel 6: Kesselunterbau</div>
<div class="abs cb" style="left:12px;top:187px"><svg width="9" height="9" viewBox="0 0 9 9"><path d="M1.300 4.500l2.200 2.300 4.200-4.800" fill="none" stroke="#000" stroke-width="1.900"/></svg></div>
<div class="t" style="left:26px;top:185px;line-height:15px">Artikel 7: Montageset RG-ST zur Befestigung</div>
<div class="abs cb" style="left:12px;top:202px"><svg width="9" height="9" viewBox="0 0 9 9"><path d="M1.300 4.500l2.200 2.300 4.200-4.800" fill="none" stroke="#000" stroke-width="1.900"/></svg></div>
<div class="t" style="left:26px;top:200px;line-height:15px">Artikel 8: Thermovar 1"</div>
<div class="abs cb" style="left:12px;top:217px"><svg width="9" height="9" viewBox="0 0 9 9"><path d="M1.300 4.500l2.200 2.300 4.200-4.800" fill="none" stroke="#000" stroke-width="1.900"/></svg></div>
<div class="t" style="left:26px;top:215px;line-height:15px">Artikel 9: HT-Abflußrohr</div>
<div class="abs cb" style="left:12px;top:232px"><svg width="9" height="9" viewBox="0 0 9 9"><path d="M1.300 4.500l2.200 2.300 4.200-4.800" fill="none" stroke="#000" stroke-width="1.900"/></svg></div>
<div class="t" style="left:26px;top:230px;line-height:15px">Artikel 10: HT-Abflußrohr</div>
<div class="abs cb" style="left:12px;top:247px"><svg width="9" height="9" viewBox="0 0 9 9"><path d="M1.300 4.500l2.200 2.300 4.200-4.800" fill="none" stroke="#000" stroke-width="1.900"/></svg></div>
<div class="t" style="left:26px;top:245px;line-height:15px">Artikel 11: PWW Sicherheitsrohr</div>
<div class="abs" style="left:160px;top:285px;width:100px;height:24px;border:1px solid #000;background:#f0f0f0"><div style="position:absolute;left:0;top:0;right:0;bottom:0;border:1px solid #fff;border-right-color:#696969;border-bottom-color:#696969;box-shadow:inset -1px -1px 0 #a0a0a0;text-align:center;line-height:20px">OK</div></div>
<div class="abs" style="left:268px;top:285px;width:100px;height:24px;border:1px solid #fff;border-right-color:#696969;border-bottom-color:#696969;box-shadow:inset -1px -1px 0 #a0a0a0;background:#f0f0f0;text-align:center;line-height:22px">Abbrechen</div>
</div>
<div class="sb" style="left:1px;width:714px"></div>
<div class="sb" style="left:718px;width:97px">Vorgang.Artikel</div>
<div class="sb" style="left:819px;width:148px">1. Auftrag (AB1900067)</div>
<div class="sb" style="left:970px;width:38px;padding-left:0;text-align:center">igel</div>
<div class="sb" style="left:1011px;width:38px;padding-left:0;text-align:center">#4</div>
<div class="sb" style="left:1052px;width:208px">Admin - Moser-Dokumentation.mdb</div>
</body></html>
